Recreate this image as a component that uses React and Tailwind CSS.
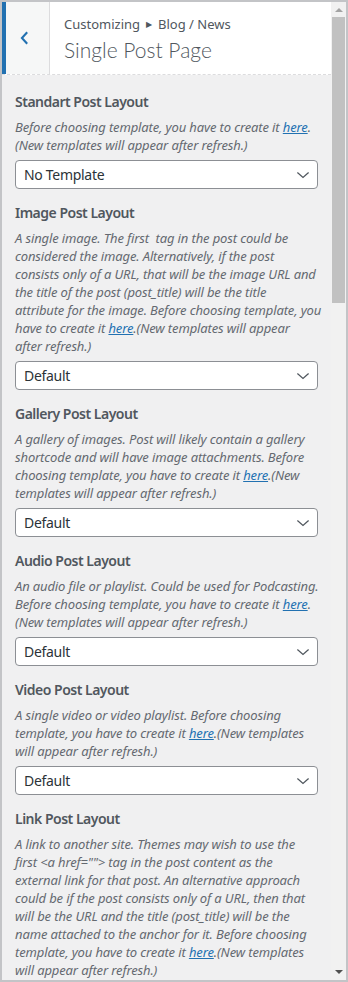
import React from "react";

const sections = [
    {
        title: "Standart Post Layout",
        lines: [
            ["Before choosing template, you have to create it ", "here", "."],
            ["(New templates will appear after refresh.)"],
        ],
        value: "No Template",
    },
    {
        title: "Image Post Layout",
        lines: [
            ["A single image. The first  tag in the post could be"],
            ["considered the image. Alternatively, if the post"],
            ["consists only of a URL, that will be the image URL and"],
            ["the title of the post (post_title) will be the title"],
            ["attribute for the image. Before choosing template, you"],
            ["have to create it ", "here", ".(New templates will appear"],
            ["after refresh.)"],
        ],
        value: "Default",
    },
    {
        title: "Gallery Post Layout",
        lines: [
            ["A gallery of images. Post will likely contain a gallery"],
            ["shortcode and will have image attachments. Before"],
            ["choosing template, you have to create it ", "here", ".(New"],
            ["templates will appear after refresh.)"],
        ],
        value: "Default",
    },
    {
        title: "Audio Post Layout",
        lines: [
            ["An audio file or playlist. Could be used for Podcasting."],
            ["Before choosing template, you have to create it ", "here", "."],
            ["(New templates will appear after refresh.)"],
        ],
        value: "Default",
    },
    {
        title: "Video Post Layout",
        lines: [
            ["A single video or video playlist. Before choosing"],
            ["template, you have to create it ", "here", ".(New templates"],
            ["will appear after refresh.)"],
        ],
        value: "Default",
    },
    {
        title: "Link Post Layout",
        lines: [
            ["A link to another site. Themes may wish to use the"],
            ["first <a href=\"\"> tag in the post content as the"],
            ["external link for that post. An alternative approach"],
            ["could be if the post consists only of a URL, then that"],
            ["will be the URL and the title (post_title) will be the"],
            ["name attached to the anchor for it. Before choosing"],
            ["template, you have to create it ", "here", ".(New templates"],
            ["will appear after refresh.)"],
        ],
        value: null,
    },
];

const Chevron = ({ className }) => (
    <svg className={className} viewBox="0 0 20 20" fill="none" stroke="currentColor" strokeWidth="1.6">
        <polyline points="3,7 10,13 17,7" />
    </svg>
);

const Select = ({ value }) => (
    <div className="mt-[6px] flex h-[29px] items-center justify-between rounded-[4px] border border-[#8c8f94] bg-white pl-[8px] pr-[6px] text-[14px] tracking-[-0.3px] text-[#2c3338]">
        <span>{value}</span>
        <Chevron className="h-[16px] w-[16px] text-[#50575e]" />
    </div>
);

const Section = ({ s }) => (
    <li className="mb-[12px]">
        <div className="text-[14px] font-semibold leading-[24px] tracking-[-0.5px] text-[#50575e]">{s.title}</div>
        <div className="mt-[4px] text-[13px] italic leading-[18px] tracking-[-0.13px] text-[#646970]">
            {s.lines.map((l, i) => (
                <div key={i} className="whitespace-pre">
                    {l[0]}
                    {l[1] && <a className="text-[#2271b1] underline">{l[1]}</a>}
                    {l[2]}
                </div>
            ))}
        </div>
        {s.value && <Select value={s.value} />}
    </li>
);

export default function App() {
    return (
        <div className="flex h-[982px] w-[348px] overflow-hidden border-2 border-[#c3c4c7] bg-[#f0f0f1] font-['Segoe_UI','Noto_Sans',sans-serif]">
            <div className="flex w-[329px] flex-col overflow-hidden">
                {/* header */}
                <div className="flex h-[73px] shrink-0 border-b border-dashed border-[#dcdcde] bg-white">
                    <div className="flex w-[48px] items-center justify-center border-l-4 border-r border-l-[#2271b1] border-r-[#dcdcde] bg-[#f6f7f7]">
                        <svg className="-ml-[6px] h-[14px] w-[14px] text-[#2271b1]" viewBox="0 0 16 16" fill="none" stroke="currentColor" strokeWidth="2.4">
                            <polyline points="10.5,1.5 4.5,8 10.5,14.5" />
                        </svg>
                    </div>
                    <div className="pl-[14px] pt-[12px] text-[#50575e]">
                        <div className="flex items-center text-[13px] leading-[20px]">
                            <span>Customizing</span>
                            <span className="mx-[6px] text-[8px]">▶</span>
                            <span>Blog / News</span>
                        </div>
                        <div className="mt-[2px] font-['Lato','Noto_Sans',sans-serif] text-[21px] font-light leading-[28px]">Single Post Page</div>
                    </div>
                </div>
                {/* content */}
                <ul className="px-[13px] pt-[15px]">
                    {sections.map((s) => (
                        <Section key={s.title} s={s} />
                    ))}
                </ul>
            </div>
            {/* scrollbar */}
            <div className="relative flex w-[15px] flex-col items-center bg-[#f1f1f1]">
                <div className="flex h-[15px] w-full items-center justify-center">
                    <div className="h-0 w-0 border-x-[4px] border-b-[4px] border-x-transparent border-b-[#a3a3a3]" />
                </div>
                <div className="h-[286px] w-[13px] bg-[#c1c1c1]" />
                <div className="flex-1" />
                <div className="flex h-[17px] w-full items-center justify-center">
                    <div className="h-0 w-0 border-x-[4px] border-t-[4px] border-x-transparent border-t-[#505050]" />
                </div>
            </div>
        </div>
    );
}
